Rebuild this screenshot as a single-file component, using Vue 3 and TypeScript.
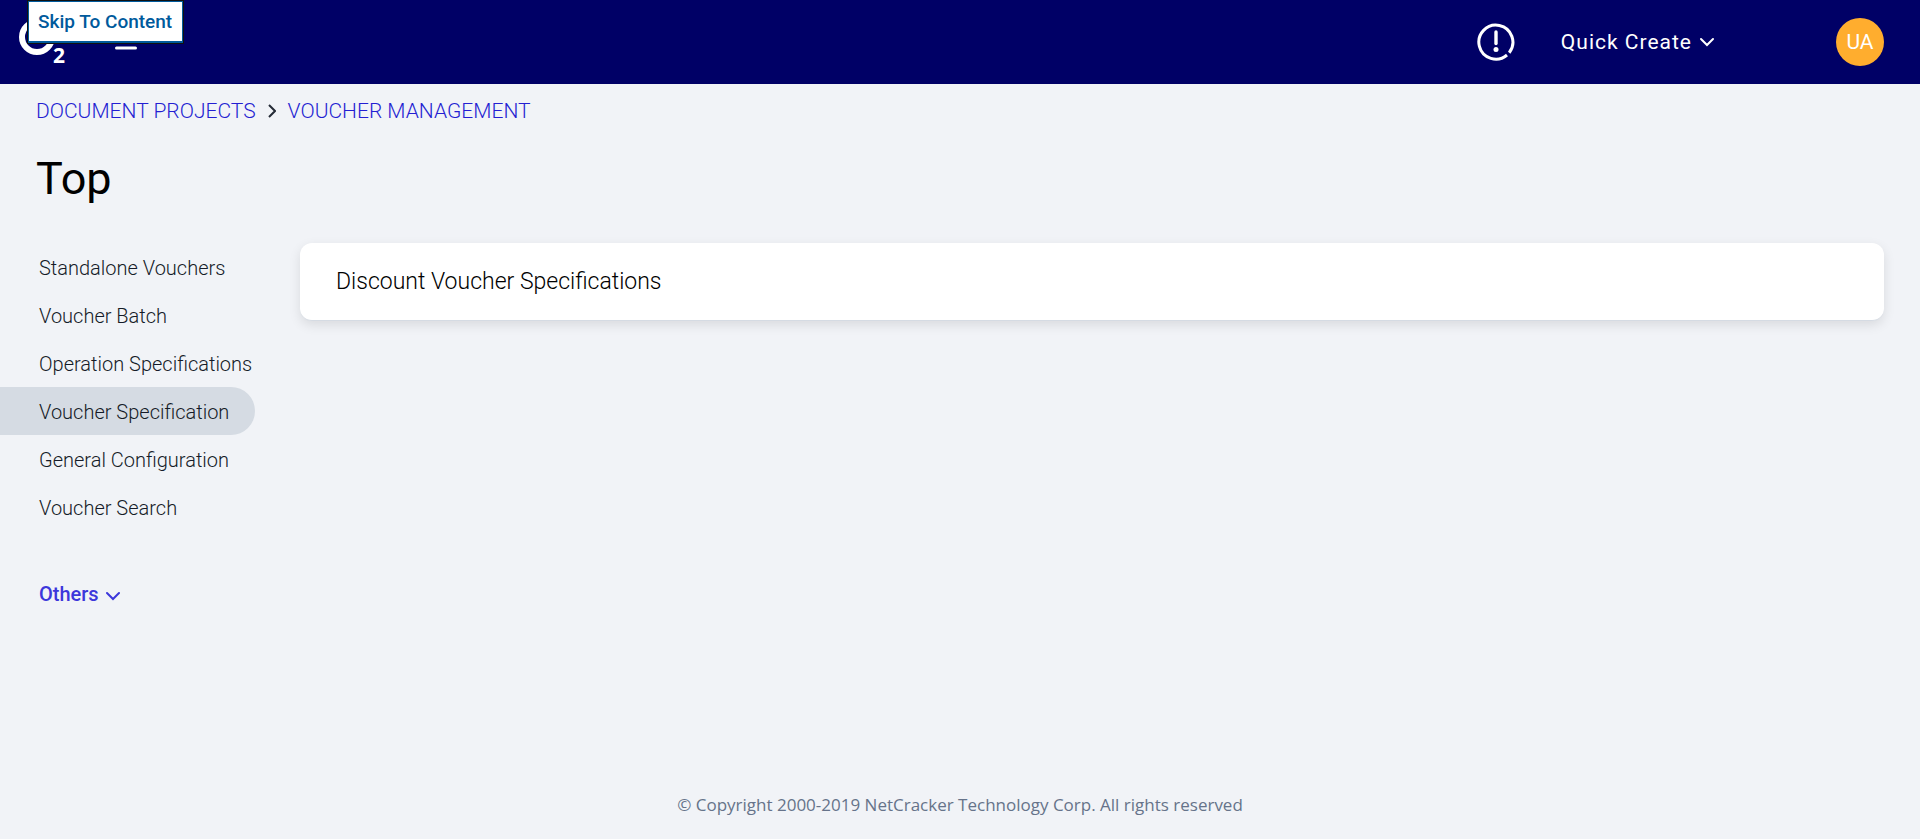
<script setup lang="ts">
import { ref } from 'vue'

interface NavItem {
  id: string
  label: string
}

const crumbs: NavItem[] = [
  { id: 'projects', label: 'DOCUMENT PROJECTS' },
  { id: 'vouchers', label: 'VOUCHER MANAGEMENT' },
]

const tabs: NavItem[] = [
  { id: 'standalone', label: 'Standalone Vouchers' },
  { id: 'batch', label: 'Voucher Batch' },
  { id: 'operations', label: 'Operation Specifications' },
  { id: 'specification', label: 'Voucher Specification' },
  { id: 'configuration', label: 'General Configuration' },
  { id: 'search', label: 'Voucher Search' },
]

const activeTab = ref('specification')
</script>

<template>
  <div class="page">
    <a class="skip" href="#content">Skip To Content</a>

    <header class="topbar">
      <a class="logo" href="#home" aria-label="Home">
        <svg width="52" height="60" viewBox="0 0 52 60" aria-hidden="true">
          <circle cx="18" cy="25" r="15" fill="none" stroke="#fff" stroke-width="6" />
          <text class="logo-sub" x="34" y="51" fill="#fff">2</text>
        </svg>
      </a>
      <button class="icon-button menu" type="button" aria-label="Menu">
        <svg width="22" height="18" viewBox="0 0 22 18" aria-hidden="true">
          <path d="M1.5 1h19M1.5 8h19M1.5 15h19" stroke="#fff" stroke-width="3" stroke-linecap="round" />
        </svg>
      </button>

      <div class="actions">
        <button class="icon-button alert" type="button" aria-label="Alerts">
          <svg width="38" height="38" viewBox="0 0 38 38" fill="none" stroke="#fff" stroke-linecap="round" aria-hidden="true">
            <path d="M32.200 29.700A17 17 0 1 0 30 32" stroke-width="3" stroke-linecap="butt" />
            <path d="M19 9V20.500" stroke-width="3.400" />
            <circle cx="19" cy="26.500" r="2.500" fill="#fff" stroke="none" />
          </svg>
        </button>
        <button class="quick" type="button">
          Quick Create
          <svg width="16" height="10" viewBox="0 0 16 10" fill="none" aria-hidden="true">
            <path d="M2 2l6 6 6-6" stroke="currentColor" stroke-width="2" stroke-linecap="round" />
          </svg>
        </button>
        <button class="avatar" type="button" aria-label="User account UA">UA</button>
      </div>
    </header>

    <nav class="crumbs" aria-label="Breadcrumb">
      <template v-for="(crumb, i) in crumbs" :key="crumb.id">
        <svg v-if="i > 0" width="8" height="14" viewBox="0 0 8 14" fill="none" aria-hidden="true">
          <path d="M1 1l6 6-6 6" stroke="#252b37" stroke-width="2" />
        </svg>
        <a :href="'#' + crumb.id">{{ crumb.label }}</a>
      </template>
    </nav>

    <h1>Top</h1>

    <div class="body">
      <nav class="side" aria-label="Sections">
        <a
          v-for="tab in tabs"
          :key="tab.id"
          :href="'#' + tab.id"
          class="tab"
          :class="{ active: tab.id === activeTab }"
          :aria-current="tab.id === activeTab ? 'page' : undefined"
          @click.prevent="activeTab = tab.id"
        >{{ tab.label }}</a>
        <button class="others" type="button">
          Others
          <svg width="14" height="14" viewBox="0 0 14 14" fill="none" aria-hidden="true">
            <path d="M1 6l6 6 6-6" stroke="currentColor" stroke-width="2" stroke-linecap="round" />
          </svg>
        </button>
      </nav>

      <main id="content">
        <section class="card">
          <h2>Discount Voucher Specifications</h2>
        </section>
      </main>
    </div>

    <footer>© Copyright 2000-2019 NetCracker Technology Corp. All rights reserved</footer>
  </div>
</template>

<style>
body {
  margin: 0;
  background: #f1f3f7;
}
</style>

<style scoped>
.page {
  position: relative;
  display: flex;
  flex-direction: column;
  min-height: 100vh;
  font-family: Roboto, "Liberation Sans", sans-serif;
  font-size: 20px;
  color: #343b48;
}

a {
  text-decoration: none;
}

button {
  padding: 0;
  border: 0;
  background: none;
  font: inherit;
  color: inherit;
  cursor: pointer;
}

svg {
  display: block;
}

.skip {
  position: absolute;
  top: 1px;
  left: 28px;
  padding: 8px 10px 7px 9px;
  border: 2px solid #005a9c;
  border-width: 1px 1px 2px;
  outline: 1px solid #101010;
  background: #fff;
  color: #005a9c;
  font-size: 19px;
  font-weight: 500;
  line-height: 24px;
}

.topbar {
  display: flex;
  align-items: center;
  box-sizing: border-box;
  height: 84px;
  padding: 0 36px 0 19px;
  background: #000066;
  color: #fff;
}

.logo-sub {
  font-family: "Noto Sans", sans-serif;
  font-size: 21px;
  font-weight: 700;
}

.menu {
  margin-left: 44px;
}

.actions {
  display: flex;
  align-items: center;
  margin-left: auto;
}

.quick {
  display: flex;
  align-items: center;
  gap: 7px;
  margin: 0 121px 0 46px;
  font-size: 21px;
  font-weight: 400;
  letter-spacing: 1px;
}

.avatar {
  width: 48px;
  height: 48px;
  border-radius: 50%;
  background: #ffad2e;
  color: #fff;
  font-size: 21px;
}

.crumbs {
  display: flex;
  align-items: center;
  gap: 12px;
  padding: 15px 36px 0;
  line-height: 24px;
}

.crumbs a {
  color: #241ed2;
  font-size: 21px;
  font-weight: 300;
}

h1 {
  margin: 28px 36px 0;
  color: #000;
  font-size: 45px;
  font-weight: 400;
  line-height: 56px;
}

.body {
  display: flex;
  gap: 45px;
  padding: 36px 36px 0 0;
}

.side {
  display: flex;
  flex: 0 0 255px;
  flex-direction: column;
  min-width: 0;
}

.tab {
  padding: 2px 0 0 39px;
  border-radius: 0 24px 24px 0;
  color: #151b28;
  font-weight: 300;
  line-height: 46px;
  white-space: nowrap;
}

.tab.active {
  background: #d5dbe3;
}

.others {
  display: flex;
  align-items: center;
  gap: 7px;
  margin: 39px 0 0 39px;
  color: #3c37db;
  font-weight: 500;
  line-height: 48px;
}

main {
  flex: 1;
  min-width: 0;
}

.card {
  padding: 23px 36px 22px;
  border-bottom: 1px solid #d5dbe3;
  border-radius: 12px;
  background: #fff;
  box-shadow: 0 4px 12px rgba(0, 0, 0, 0.1);
}

h2 {
  margin: 0;
  color: #000;
  font-size: 23px;
  font-weight: 300;
  line-height: 32px;
}

footer {
  margin-top: auto;
  padding: 24px 36px 22px;
  color: #66738a;
  font-family: "Open Sans", "Noto Sans", sans-serif;
  font-size: 17px;
  line-height: 24px;
  text-align: center;
}
</style>
